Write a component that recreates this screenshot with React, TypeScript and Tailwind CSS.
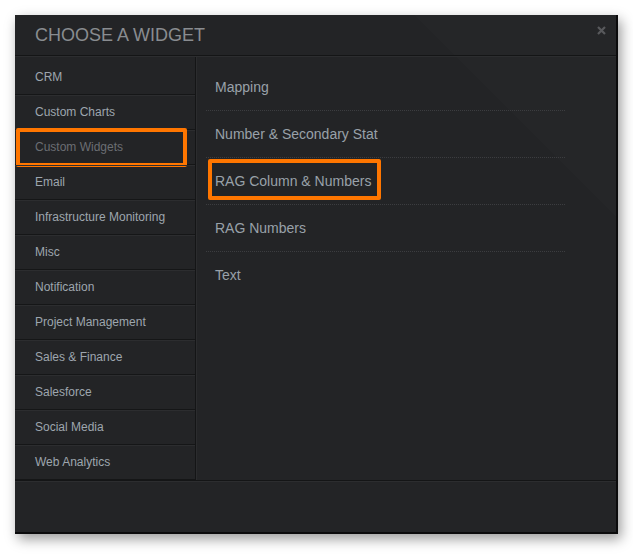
import React from 'react';

const categories = [
  'CRM',
  'Custom Charts',
  'Custom Widgets',
  'Email',
  'Infrastructure Monitoring',
  'Misc',
  'Notification',
  'Project Management',
  'Sales & Finance',
  'Salesforce',
  'Social Media',
  'Web Analytics',
];

const widgets = ['Mapping', 'Number & Secondary Stat', 'RAG Column & Numbers', 'RAG Numbers', 'Text'];

export default function App() {
  const active = 'Custom Widgets';
  const picked = 'RAG Column & Numbers';

  return (
    <div className="min-h-screen bg-white p-[15px]" style={{ fontFamily: '"Liberation Sans", Arial, sans-serif' }}>
      <div className="relative flex h-[519px] w-[603px] flex-col border-r-2 border-b-2 border-[#0b0b0c] bg-[#232426] bg-[linear-gradient(225deg,#252628_0,#252628_18%,#232426_18%)] shadow-[3px_5px_12px_rgba(0,0,0,0.4)]">
        <div className="flex h-[41px] items-center border-b border-[#141516] pl-5">
          <h1 className="text-[18px] leading-none text-[#898c90]">CHOOSE A WIDGET</h1>
        </div>
        <button className="absolute left-[582px] top-[11px] h-[9px] w-[9px]">
          <svg viewBox="0 0 9 9" className="h-[9px] w-[9px]">
            <path d="M1 1L8 8M8 1L1 8" stroke="#58595c" strokeWidth="2.2" />
          </svg>
        </button>

        <div className="flex h-[424px] border-t border-[#2c2d2f]">
          <div className="w-[181px] border-r border-[#141516]">
            {categories.map((c, i) => (
              <div
                key={c}
                className={
                  'relative flex items-center border-b border-[#151617] pl-5 text-[12px] ' +
                  (i === 0 ? 'h-[38px] pt-[2px]' : 'h-[35px] pb-[1px] border-t border-t-[#2c2d2f]') +
                  (c === active ? ' text-[#6b6e73]' : ' text-[#9ea6ae]')
                }
              >
                {c}
                {c === active && (
                  <div className="absolute left-[1px] top-[-3px] h-[39px] w-[171px] rounded-[2px] border-4 border-[#ff7600]" />
                )}
              </div>
            ))}
          </div>
          <div className="flex-1 border-l border-[#2b2c2e] pl-[9px] pt-[7px]">
            <div className="w-[359px]">
              {widgets.map((w, i) => (
                <div
                  key={w}
                  className={
                    'relative flex h-[47px] items-center pl-[9px] text-[14px] text-[#99a1a9] ' +
                    (i < widgets.length - 1 ? 'border-b border-dotted border-[#3c3d40]' : '')
                  }
                >
                  {w}
                  {w === picked && (
                    <div className="absolute left-[2px] top-[1px] h-[41px] w-[173px] rounded-[2px] border-4 border-[#ff7600]" />
                  )}
                </div>
              ))}
            </div>
          </div>
        </div>

        <div className="flex-1 border-t border-[#141516] shadow-[inset_0_1px_0_#2c2d2f]" />
      </div>
    </div>
  );
}
